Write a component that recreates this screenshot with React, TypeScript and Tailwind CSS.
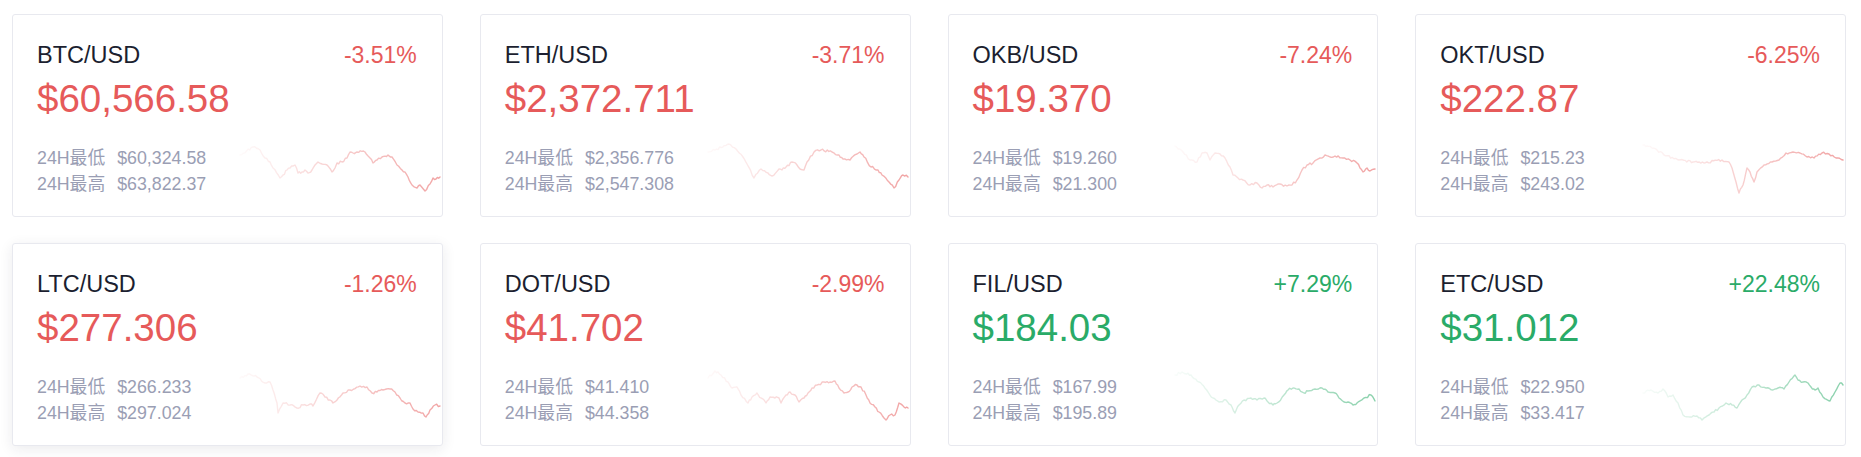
import React from "react";

type Ticker = {
  pair: string;
  change: string;
  price: string;
  low: string;
  high: string;
  up: boolean;
  line: [number, number][];
};

const RED = "#e65a5a";
const GREEN = "#2aab68";

const tickers: Ticker[] = [
  {
    pair: "BTC/USD", change: "-3.51%", price: "$60,566.58", low: "$60,324.58", high: "$63,822.37", up: false,
    line: [[0,15],[13,7],[20,10],[25,18],[30,22],[33,28],[40,38],[43,35],[47,30],[50,28],[55,25],[58,33],[62,32],[65,30],[68,33],[72,30],[75,25],[78,22],[82,24],[87,25],[92,32],[95,28],[97,23],[102,22],[107,18],[110,12],[113,13],[117,12],[125,12],[130,18],[133,23],[137,20],[142,17],[148,15],[152,17],[157,25],[162,30],[165,32],[168,37],[172,45],[177,48],[180,45],[185,51],[190,44],[193,38],[196,39],[200,37]],
  },
  {
    pair: "ETH/USD", change: "-3.71%", price: "$2,372.711", low: "$2,356.776", high: "$2,547.308", up: false,
    line: [[0,12],[7,10],[21,4],[28,9],[35,17],[39,24],[46,38],[53,29],[60,33],[64,36],[71,29],[74,30],[78,27],[84,22],[89,25],[92,29],[96,30],[99,22],[106,12],[113,10],[124,12],[131,15],[135,19],[142,20],[149,14],[152,12],[156,17],[163,27],[170,30],[174,35],[181,42],[186,48],[191,40],[195,35],[200,37]],
  },
  {
    pair: "OKB/USD", change: "-7.24%", price: "$19.370", low: "$19.260", high: "$21.300", up: false,
    line: [[0,6],[8,12],[15,20],[22,22],[27,13],[32,13],[35,20],[40,13],[45,14],[50,18],[55,27],[58,35],[63,38],[68,40],[75,45],[82,43],[87,48],[92,45],[98,47],[105,44],[112,46],[117,45],[122,40],[127,30],[132,25],[138,23],[145,18],[150,15],[155,17],[160,16],[168,18],[175,20],[182,23],[185,28],[188,32],[192,28],[195,31],[200,29]],
  },
  {
    pair: "OKT/USD", change: "-6.25%", price: "$222.87", low: "$215.23", high: "$243.02", up: false,
    line: [[0,5],[4,6],[14,10],[21,15],[36,20],[50,22],[64,22],[79,20],[86,22],[89,28],[93,42],[96,53],[100,45],[104,28],[107,32],[111,42],[114,32],[121,25],[129,22],[136,20],[143,13],[150,12],[157,13],[164,17],[171,18],[179,13],[186,14],[193,18],[200,20]],
  },
  {
    pair: "LTC/USD", change: "-1.26%", price: "$277.306", low: "$266.233", high: "$297.024", up: false,
    line: [[0,9],[8,5],[17,8],[25,14],[30,13],[33,21],[37,34],[38,44],[43,34],[50,36],[57,39],[63,36],[70,35],[73,37],[80,24],[85,28],[90,31],[93,34],[97,31],[103,24],[110,21],[120,17],[127,18],[132,24],[137,23],[143,21],[150,20],[155,23],[160,29],[165,34],[170,34],[173,40],[178,43],[183,44],[186,48],[190,41],[195,36],[200,37]],
  },
  {
    pair: "DOT/USD", change: "-2.99%", price: "$41.702", low: "$41.410", high: "$44.358", up: false,
    line: [[0,9],[7,2],[13,6],[20,13],[24,19],[29,18],[33,26],[40,34],[44,28],[49,24],[53,29],[58,34],[62,28],[67,29],[71,29],[73,34],[78,26],[82,23],[87,26],[91,33],[96,29],[100,24],[104,19],[109,16],[116,13],[122,13],[127,12],[131,19],[136,24],[140,23],[144,18],[149,16],[153,18],[158,26],[162,34],[167,38],[171,43],[176,49],[178,51],[182,46],[187,46],[191,34],[196,38],[200,39]],
  },
  {
    pair: "FIL/USD", change: "+7.29%", price: "$184.03", low: "$167.99", high: "$195.89", up: true,
    line: [[0,6],[7,3],[16,6],[24,13],[33,23],[38,29],[44,33],[51,31],[56,36],[60,44],[64,36],[69,31],[76,29],[82,31],[89,29],[93,33],[98,36],[102,34],[109,26],[113,21],[118,19],[124,20],[129,24],[133,22],[140,20],[147,19],[153,23],[160,24],[164,29],[169,33],[173,33],[178,36],[182,34],[189,29],[196,26],[200,32]],
  },
  {
    pair: "ETC/USD", change: "+22.48%", price: "$31.012", low: "$22.950", high: "$33.417", up: true,
    line: [[0,24],[8,21],[15,24],[20,20],[25,28],[30,26],[35,34],[40,46],[47,48],[54,47],[59,51],[66,46],[71,43],[76,39],[83,34],[89,36],[94,39],[99,31],[104,26],[109,18],[116,16],[123,19],[130,21],[135,19],[141,20],[146,13],[152,6],[155,11],[160,13],[165,14],[168,18],[172,21],[175,19],[180,28],[187,32],[192,23],[197,14],[200,16]],
  },
];

// Densify the key points with a small deterministic wobble so the line looks like tick data.
function buildPath(points: [number, number][], seed: number): string {
  const out: string[] = [];
  let k = seed;
  const rand = () => {
    k = (k * 9301 + 49297) % 233280;
    return k / 233280 - 0.5;
  };
  for (let i = 0; i < points.length - 1; i++) {
    const [x0, y0] = points[i];
    const [x1, y1] = points[i + 1];
    const steps = Math.max(1, Math.round((x1 - x0) / 1.6));
    for (let s = 0; s < steps; s++) {
      const t = s / steps;
      const x = x0 + (x1 - x0) * t;
      const jitter = s === 0 ? 0 : rand() * 2.4;
      const y = y0 + (y1 - y0) * t + jitter;
      out.push(`${out.length === 0 ? "M" : "L"}${x.toFixed(2)} ${y.toFixed(2)}`);
    }
  }
  const last = points[points.length - 1];
  out.push(`L${last[0]} ${last[1]}`);
  return out.join(" ");
}

function Sparkline({ line, color, id, seed }: { line: [number, number][]; color: string; id: string; seed: number }) {
  return (
    <svg width="204" height="52" viewBox="-2 5 204 52" overflow="visible" className="block shrink-0 -mr-[25px]">
      <defs>
        <linearGradient id={id} gradientUnits="userSpaceOnUse" x1="0" y1="0" x2="200" y2="0">
          <stop offset="0" stopColor={color} stopOpacity="0.03" />
          <stop offset="0.45" stopColor={color} stopOpacity="0.27" />
          <stop offset="1" stopColor={color} stopOpacity="0.55" />
        </linearGradient>
      </defs>
      <path d={buildPath(line, seed)} fill="none" stroke={`url(#${id})`} strokeWidth="1.4" strokeLinejoin="round" strokeLinecap="round" />
    </svg>
  );
}

function TickerCard({ t, index }: { t: Ticker; index: number }) {
  const color = t.up ? GREEN : RED;
  const hovered = t.pair === "LTC/USD";
  return (
    <div
      className={`bg-white border border-[#e8e9ef] rounded-[3px] pl-[24px] pr-[25px] pt-[26px] pb-[19px] overflow-hidden ${
        hovered ? "shadow-[0_3px_14px_rgba(30,35,60,0.09)]" : ""
      }`}
    >
      <div className="flex items-center justify-between h-[28px]">
        <span className="text-[23.5px] leading-[28px] text-[#1c1f30]">{t.pair}</span>
        <span className={`text-[23px] leading-[28px] ${t.up ? "text-[#2aab68]" : "text-[#e65a5a]"}`}>{t.change}</span>
      </div>
      <div className={`mt-[8px] text-[38.5px] leading-[44px] ${t.up ? "text-[#2aab68]" : "text-[#e65a5a]"}`}>{t.price}</div>
      <div className="mt-[24px] flex items-end justify-between">
        <div className="text-[17.8px] leading-[26px] text-[#9a9eb4]">
          <div className="flex gap-[12px]">
            <span>24H最低</span>
            <span>{t.low}</span>
          </div>
          <div className="flex gap-[12px]">
            <span>24H最高</span>
            <span>{t.high}</span>
          </div>
        </div>
        <Sparkline line={t.line} color={color} id={`spark-${index}`} seed={index * 97 + 13} />
      </div>
    </div>
  );
}

export default function App() {
  return (
    <div className="bg-white w-full min-h-[457px] pl-[12px] pr-[15px] pt-[14px] font-['Liberation_Sans','Noto_Sans_CJK_SC',sans-serif]">
      <div className="grid grid-cols-4 gap-x-[37px] gap-y-[26px]">
        {tickers.map((t, i) => (
          <TickerCard key={t.pair} t={t} index={i} />
        ))}
      </div>
    </div>
  );
}
